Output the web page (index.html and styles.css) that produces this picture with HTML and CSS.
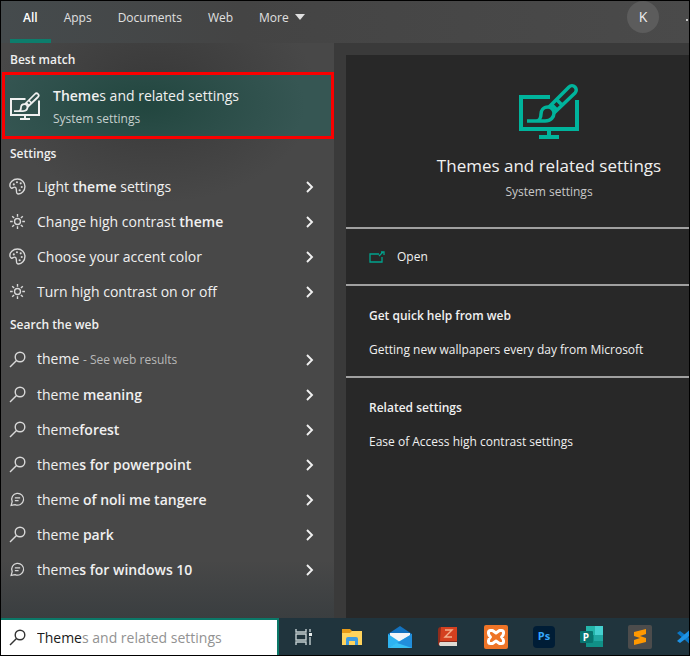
FILE: index.html
```html
<!DOCTYPE html>
<html lang="en">
<head>
  <meta charset="UTF-8">
  <title>Search</title>
  <meta name="viewport" content="width=device-width, initial-scale=1.0">
  <link rel="stylesheet" href="styles.css">
</head>
<body>
  <!-- Shared icons -->
  <svg class="icon-defs" aria-hidden="true">
    <symbol id="icon-monitor" viewBox="0 0 60 56">
      <path d="M31 14H2v32h56V17" fill="none" stroke="currentColor" stroke-width="4"/>
      <path d="M30 46v7M20 54h20" fill="none" stroke="currentColor" stroke-width="4"/>
      <path d="M8 38h18c6 0 9-4 9-8 0-3-3-6-6-6-5 0-7 4-7 7 0 4-2 7-5 7" fill="none" stroke="currentColor" stroke-width="3.500"/>
      <path d="M30 24L50 4a4 4 0 0 1 6 6L35 30M32 21l7 7M37 16l7 7" fill="none" stroke="currentColor" stroke-width="3.500"/>
    </symbol>
    <symbol id="icon-palette" viewBox="0 0 16 16">
      <path d="M1 8C0 4 4 1 8 1c4 0 7 3 7 7s-3 7-6 7c-2 0-2-1-2-3 0-3-1-4-3-3-1 1-2 1-3-1z" fill="none" stroke="currentColor" stroke-width="1.3"/>
      <g fill="currentColor"><circle cx="4.5" cy="6" r="1"/><circle cx="7.5" cy="4" r="1"/><circle cx="11" cy="5" r="1"/><circle cx="12" cy="8.5" r="1"/><circle cx="10" cy="11.5" r="1"/></g>
    </symbol>
    <symbol id="icon-sun" viewBox="0 0 16 16">
      <circle cx="8" cy="8" r="2.8" fill="none" stroke="currentColor" stroke-width="1.3"/>
      <path d="M8 1v2.500M8 12.500V15M1 8h2.500M12.500 8H15M3 3l1.800 1.800M11.200 11.200L13 13M3 13l1.800-1.800M11.200 4.800L13 3" stroke="currentColor" stroke-width="1.3"/>
    </symbol>
    <symbol id="icon-search" viewBox="0 0 17 17">
      <circle cx="11" cy="6" r="4.800" fill="none" stroke="currentColor" stroke-width="1.400"/>
      <path d="M7.500 9.500L1 16" stroke="currentColor" stroke-width="1.400"/>
    </symbol>
    <symbol id="icon-chat" viewBox="0 0 16 16">
      <path d="M2 13.500l1-3.500a5.600 5.600 0 1 1 2.700 2.800z" fill="none" stroke="currentColor" stroke-width="1.200"/>
      <path d="M5.500 6.500h5M5.500 9h3.500" stroke="currentColor" stroke-width="1.200"/>
    </symbol>
    <symbol id="icon-chevron" viewBox="0 0 8 12">
      <path d="M1 1l5 5-5 5" fill="none" stroke="currentColor" stroke-width="1.900"/>
    </symbol>
  </svg>

  <header class="topbar">
    <nav class="tabs">
      <button class="tab active">All</button>
      <button class="tab">Apps</button>
      <button class="tab">Documents</button>
      <button class="tab">Web</button>
      <button class="tab">More <svg class="caret" viewBox="0 0 10 6"><path d="M0 0h10L5 6z" fill="currentColor"/></svg></button>
    </nav>
    <button class="avatar">K</button>
    <button class="more-options" aria-label="Options"><svg viewBox="0 0 4 4"><circle cx="2" cy="2" r="1" fill="currentColor"/></svg></button>
  </header>

  <main class="content">
    <section class="results">
      <h2 class="first">Best match</h2>
      <a href="#" class="best-match">
        <svg class="best-icon"><use href="#icon-monitor"/></svg>
        <span class="best-text">
          <span class="best-title"><b>Theme</b>s and related settings</span>
          <span class="best-sub">System settings</span>
        </span>
      </a>

      <h2>Settings</h2>
      <ul class="list">
        <li><a href="#"><svg class="icon"><use href="#icon-palette"/></svg><span class="name">Light <b>theme</b> settings</span><svg class="chevron"><use href="#icon-chevron"/></svg></a></li>
        <li><a href="#"><svg class="icon"><use href="#icon-sun"/></svg><span class="name">Change high contrast <b>theme</b></span><svg class="chevron"><use href="#icon-chevron"/></svg></a></li>
        <li><a href="#"><svg class="icon"><use href="#icon-palette"/></svg><span class="name">Choose your accent color</span><svg class="chevron"><use href="#icon-chevron"/></svg></a></li>
        <li><a href="#"><svg class="icon"><use href="#icon-sun"/></svg><span class="name">Turn high contrast on or off</span><svg class="chevron"><use href="#icon-chevron"/></svg></a></li>
      </ul>

      <h2 class="web-title">Search the web</h2>
      <ul class="list">
        <li><a href="#"><svg class="icon"><use href="#icon-search"/></svg><span class="name">theme <small>- See web results</small></span><svg class="chevron"><use href="#icon-chevron"/></svg></a></li>
        <li><a href="#"><svg class="icon"><use href="#icon-search"/></svg><span class="name">theme <b>meaning</b></span><svg class="chevron"><use href="#icon-chevron"/></svg></a></li>
        <li><a href="#"><svg class="icon"><use href="#icon-search"/></svg><span class="name">theme<b>forest</b></span><svg class="chevron"><use href="#icon-chevron"/></svg></a></li>
        <li><a href="#"><svg class="icon"><use href="#icon-search"/></svg><span class="name">theme<b>s for powerpoint</b></span><svg class="chevron"><use href="#icon-chevron"/></svg></a></li>
        <li><a href="#"><svg class="icon"><use href="#icon-chat"/></svg><span class="name">theme <b>of noli me tangere</b></span><svg class="chevron"><use href="#icon-chevron"/></svg></a></li>
        <li><a href="#"><svg class="icon"><use href="#icon-search"/></svg><span class="name">theme <b>park</b></span><svg class="chevron"><use href="#icon-chevron"/></svg></a></li>
        <li><a href="#"><svg class="icon"><use href="#icon-chat"/></svg><span class="name">theme<b>s for windows 10</b></span><svg class="chevron"><use href="#icon-chevron"/></svg></a></li>
      </ul>
    </section>

    <section class="preview">
      <div class="hero">
        <svg class="hero-icon"><use href="#icon-monitor"/></svg>
        <h1>Themes and related settings</h1>
        <p>System settings</p>
      </div>
      <div class="open-row">
        <a href="#">
          <svg class="open-icon" viewBox="0 0 16 12"><path d="M10 3H1v8h12V6M10 5l4-4M12 1h3v3" fill="none" stroke="currentColor" stroke-width="1.300"/></svg>
          Open
        </a>
      </div>
      <div class="group">
        <h3>Get quick help from web</h3>
        <a href="#">Getting new wallpapers every day from Microsoft</a>
      </div>
      <div class="group">
        <h3>Related settings</h3>
        <a href="#">Ease of Access high contrast settings</a>
      </div>
    </section>
  </main>

  <footer class="taskbar">
    <label class="search-box">
      <svg class="icon"><use href="#icon-search"/></svg>
      <input type="text" value="Theme" aria-label="Search"><span class="suggestion">s and related settings</span>
    </label>
    <div class="apps">
      <button aria-label="Task View">
        <svg class="task-view" viewBox="0 0 18 16"><g fill="none" stroke="#c3ced0" stroke-width="1.400"><path d="M1 0v3h10V0M1 16v-3h10v3M1 5h10v6H1zM15 0v3M15 8v8"/></g><path d="M14 4h3v3h-3z" fill="#e6ecec"/></svg>
      </button>
      <button aria-label="File Explorer">
        <svg viewBox="0 0 24 24"><path d="M2 4h8l2 2h10v4H2z" fill="#e79a17"/><path d="M2 8h8l2-2h10v14H2z" fill="#ffd35c"/><path d="M6 20v-6q0-2 2-2h8q2 0 2 2v6h-3v-4H9v4z" fill="#3e9be0"/></svg>
      </button>
      <button aria-label="Mail">
        <svg viewBox="0 0 24 24"><path d="M0 9L12 1l12 8v14H0z" fill="#1372bf"/><path d="M2 8h20v6l-10 5-10-5z" fill="#f4f6f8"/><path d="M0 9l12 8-12 6z" fill="#2eb3f0"/><path d="M24 9L0 23h24z" fill="#37bff3"/><path d="M24 9v14L9 18z" fill="#218edb"/></svg>
      </button>
      <button aria-label="Dictionary">
        <svg viewBox="0 0 24 24"><path d="M5 2h16v19H5q-3 0-3-3V5q0-3 3-3z" fill="#8f2c1c"/><path d="M5 2h16v14H4z" fill="#d4401f"/><path d="M4 17h17v4H4q-2-2 0-4z" fill="#dedbd4"/><path d="M9 5h7l-7 7h7" fill="none" stroke="#f3b08d" stroke-width="1.400"/></svg>
      </button>
      <button aria-label="XAMPP">
        <svg viewBox="0 0 24 24"><rect width="24" height="24" rx="2" fill="#ee7427"/><path d="M6.500 5.500h2l3.500 2.500 3.500-2.500h2q2 0 2 2v1q0 1.500-2 3.500 2 2 2 3.500v1q0 2-2 2h-2L12 16l-3.500 2.500h-2q-2 0-2-2v-1q0-1.500 2-3.500-2-2-2-3.500v-1q0-2 2-2z" fill="none" stroke="#fff" stroke-width="3" stroke-linejoin="round"/></svg>
      </button>
      <button aria-label="Photoshop">
        <svg viewBox="0 0 24 24"><rect x="1" y="1" width="22" height="22" rx="4" fill="#001d36"/><text x="12" y="15" class="ps">Ps</text></svg>
      </button>
      <button aria-label="Publisher">
        <svg viewBox="0 0 24 24"><path d="M6 1h17v21H6z" fill="#109087"/><path d="M6 1h9v9H6z" fill="#24b5aa"/><path d="M15 1h8v15h-8z" fill="#45d0d0"/><path d="M14 10h9v6h-9z" fill="#20a7a2"/><rect y="6" width="13" height="12" rx="1" fill="#087570"/><text x="6" y="16" class="pub">P</text></svg>
      </button>
      <button aria-label="Sublime Text">
        <svg viewBox="0 0 24 24"><rect width="24" height="24" rx="2" fill="#4c4c4c"/><path d="M6 7l12-3v5l-6 2 6 2v4L6 20v-5l6-2-6-2z" fill="#ff9800"/></svg>
      </button>
      <button aria-label="Visual Studio Code">
        <svg viewBox="0 0 24 24"><path d="M1 8l3-2 19 14-5 3z" fill="#0b76c5"/><path d="M1 16l3 2L23 4l-5-3z" fill="#1e93e6"/><path d="M18 1l5 3v16l-5 3z" fill="#38aaf5"/></svg>
      </button>
    </div>
  </footer>
</body>
</html>
```

FILE: styles.css
```css
* {
  box-sizing: border-box;
}
body {
  margin: 0;
  min-height: 100vh;
  display: flex;
  flex-direction: column;
  border: 1px solid #000;
  background: #3a3a3a;
  color: #f0f0f0;
  font-family: 'Segoe UI', 'Open Sans', 'Noto Sans', sans-serif;
  font-size: 14px;
  line-height: 20px;
  overflow-x: hidden;
}
h1, h2, h3, p, ul {
  margin: 0;
  padding: 0;
}
a {
  color: inherit;
  text-decoration: none;
}
button {
  border: none;
  padding: 0;
  background: none;
  color: inherit;
  font: inherit;
  cursor: pointer;
}
b {
  font-weight: 600;
}
.icon-defs {
  display: none;
}

/* Top bar */
.topbar {
  display: flex;
  height: 42px;
  background: linear-gradient(90deg, #454b4d, #444 35%, #4a4a4a);
}
.tabs {
  display: flex;
  flex: 1;
  padding-left: 9px;
}
.tab {
  padding: 0 13px 5px;
  border-bottom: 4px solid transparent;
  font-size: 12px;
  color: #e0e0e0;
}
.tab.active {
  border-bottom-color: #0d7d6c;
  color: #fff;
  font-weight: 600;
}
.caret {
  width: 10px;
  height: 6px;
  margin-left: 3px;
  vertical-align: 2px;
}
.avatar {
  width: 32px;
  height: 32px;
  margin-right: 26px;
  border-radius: 50%;
  background: #5c5c5c;
}
.more-options {
  width: 4px;
  height: 32px;
}
.more-options svg {
  width: 4px;
  height: 4px;
}

/* Results */
.content {
  display: grid;
  grid-template-columns: 333px 1fr;
  gap: 12px;
  flex: 1;
}
.results {
  background: radial-gradient(ellipse 160px 110px at 155px 50px, #383838, transparent), linear-gradient(#484848 90%, #3a3e40);
}
.results h2 {
  padding: 7px 9px;
  font-size: 12px;
  font-weight: 600;
  line-height: 16px;
}
.results .first {
  padding-top: 9px;
  padding-bottom: 4px;
}
.results .web-title {
  padding-top: 8px;
  padding-bottom: 9px;
}
.best-match {
  display: flex;
  align-items: center;
  gap: 13px;
  height: 67px;
  margin-left: 1px;
  padding-left: 5px;
  border: 3px solid #fa0000;
  background: radial-gradient(ellipse 160px 80px at 140px 30px, #22463f, #365653);
}
.best-icon {
  width: 30px;
  height: 28px;
}
.best-text {
  display: flex;
  flex-direction: column;
  gap: 3px;
  padding-top: 3px;
}
.best-sub {
  font-size: 12px;
  color: #c6d0ce;
}
.list {
  list-style: none;
}
.list a {
  display: flex;
  align-items: center;
  height: 35px;
  padding: 0 20px 0 8px;
}
.icon {
  width: 17px;
  height: 17px;
  margin-right: 11px;
  color: #d8d8d8;
}
.name {
  flex: 1;
}
.name small {
  font-size: 12px;
  color: #b8b8b8;
}
.chevron {
  width: 8px;
  height: 12px;
}

/* Preview pane */
.preview {
  margin-top: 12px;
  background: #282828;
}
.hero {
  padding: 28px 0 25px 63px;
  display: flex;
  flex-direction: column;
  align-items: center;
}
.hero-icon {
  width: 60px;
  height: 56px;
  color: #00b49c;
}
.hero h1 {
  margin-top: 15px;
  font-size: 17px;
  font-weight: 400;
  line-height: 24px;
}
.hero p {
  margin-top: 4px;
  font-size: 12px;
  color: #c8c8c8;
}
.open-row, .group {
  border-top: 2px solid #a0a0a0;
}
.open-row a {
  display: flex;
  align-items: center;
  gap: 12px;
  height: 55px;
  padding-left: 23px;
  font-size: 12px;
}
.open-icon {
  width: 16px;
  height: 12px;
  color: #00a38d;
}
.group {
  padding: 20px 23px 16px;
  font-size: 12px;
}
.group h3 {
  margin-bottom: 14px;
  font-size: 12px;
  font-weight: 600;
}
.group a {
  display: block;
}

/* Taskbar */
.taskbar {
  display: flex;
  height: 37px;
  background: #20343d;
  overflow: hidden;
}
.search-box {
  display: flex;
  align-items: center;
  flex: none;
  width: 278px;
  padding-left: 8px;
  border-top: 2px solid #0b7868;
  border-right: 2px solid #0b7868;
  background: #fff;
  color: #929292;
  cursor: text;
}
.search-box .icon {
  color: #333;
}
.search-box input {
  field-sizing: content;
  padding: 0;
  border: none;
  outline: none;
  background: none;
  color: #1a1a1a;
  font: inherit;
}
.apps {
  display: flex;
  padding-left: 1px;
}
.apps button {
  display: flex;
  align-items: center;
  justify-content: center;
  flex: none;
  width: 48px;
}
.apps svg {
  width: 24px;
  height: 24px;
}
.apps .task-view {
  width: 18px;
  height: 16px;
}
.ps {
  fill: #35a8ff;
  font-size: 11px;
  font-weight: 700;
  text-anchor: middle;
}
.pub {
  fill: #fff;
  font-size: 10px;
  font-weight: 700;
  text-anchor: middle;
}
```
